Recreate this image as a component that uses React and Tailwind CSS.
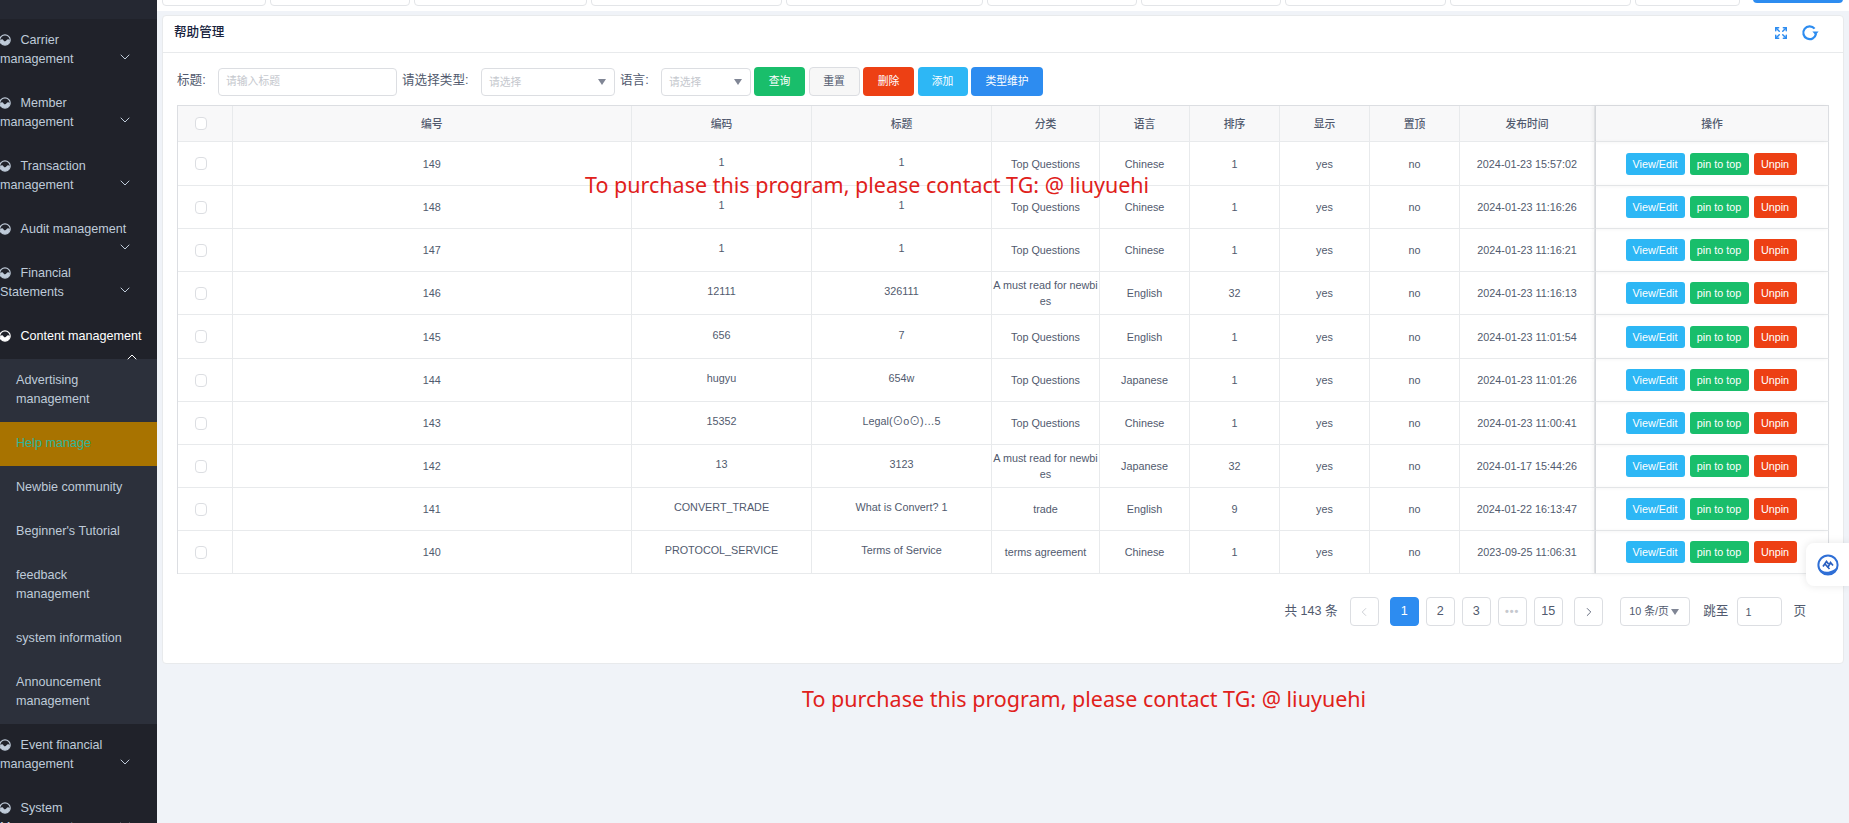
import React from 'react';
import { ChevronDown, ChevronUp, ChevronLeft, ChevronRight, Expand } from 'lucide-react';

const FONT = "font-['Liberation_Sans','Noto_Sans_CJK_SC',sans-serif]";

const rows = [
  { id: 149, code: '1', title: '1', cat: 'Top Questions', lang: 'Chinese', sort: 1, time: '2024-01-23 15:57:02' },
  { id: 148, code: '1', title: '1', cat: 'Top Questions', lang: 'Chinese', sort: 1, time: '2024-01-23 11:16:26' },
  { id: 147, code: '1', title: '1', cat: 'Top Questions', lang: 'Chinese', sort: 1, time: '2024-01-23 11:16:21' },
  { id: 146, code: '12111', title: '326111', cat: 'A must read for newbies', lang: 'English', sort: 32, time: '2024-01-23 11:16:13' },
  { id: 145, code: '656', title: '7', cat: 'Top Questions', lang: 'English', sort: 1, time: '2024-01-23 11:01:54' },
  { id: 144, code: 'hugyu', title: '654w', cat: 'Top Questions', lang: 'Japanese', sort: 1, time: '2024-01-23 11:01:26' },
  { id: 143, code: '15352', title: 'Legal(⊙o⊙)…5', cat: 'Top Questions', lang: 'Chinese', sort: 1, time: '2024-01-23 11:00:41' },
  { id: 142, code: '13', title: '3123', cat: 'A must read for newbies', lang: 'Japanese', sort: 32, time: '2024-01-17 15:44:26' },
  { id: 141, code: 'CONVERT_TRADE', title: 'What is Convert? 1', cat: 'trade', lang: 'English', sort: 9, time: '2024-01-22 16:13:47' },
  { id: 140, code: 'PROTOCOL_SERVICE', title: 'Terms of Service', cat: 'terms agreement', lang: 'Chinese', sort: 1, time: '2023-09-25 11:06:31' },
];

const heads = ['编号', '编码', '标题', '分类', '语言', '排序', '显示', '置顶', '发布时间'];
const colWidths = ['w-[54.5px]', 'w-[399.5px]', 'w-[180px]', 'w-[180px]', 'w-[108px]', 'w-[90px]', 'w-[90px]', 'w-[90px]', 'w-[90px]', 'w-[135px]', 'w-[234px]'];
const stripBoxes = ['w-[103.5px]', 'w-[140px]', 'w-[173.5px]', 'w-[190.5px]', 'w-[197px]', 'w-[150.5px]', 'w-[140px]', 'w-[160.5px]', 'w-[181.5px]', 'w-[105px]'];

const MenuIcon = ({ className = 'text-[#bfcbd9]' }) => (
  <svg viewBox="0 0 12 12" className={`-ml-[1.5px] mr-[10px] h-3 w-3 shrink-0 ${className}`}>
    <circle cx="6" cy="6" r="5.2" fill="none" stroke="currentColor" strokeWidth="1.2" />
    <path d="M1 6.5C2.5 5 3.7 5 4.6 6.4C5.3 7.6 6.8 7.6 7.5 6.3C8.4 4.8 9.8 5 11 6.3C10.7 9.3 8.5 11 6 11C3.5 11 1.4 9.3 1 6.5Z" fill="currentColor" />
  </svg>
);

const Parent = ({ first, second, chevronTop = 'top-[30px]', open }) => (
  <div className={`relative pt-[11.5px] pb-[13.5px] ${open ? 'font-medium text-white' : 'text-[#bfcbd9]'}`}>
    <div className="flex items-center">
      <MenuIcon className={open ? 'text-white' : 'text-[#bfcbd9]'} />
      <span className="whitespace-nowrap">{first}</span>
    </div>
    {second && <div className="whitespace-nowrap">{second}</div>}
    {open ? (
      <ChevronUp size={16} strokeWidth={1.5} className="absolute left-[124px] top-[34px] text-white" />
    ) : (
      <ChevronDown size={16} strokeWidth={1.5} className={`absolute left-[116.5px] ${chevronTop} text-[#bfcbd9]`} />
    )}
  </div>
);

const SubItem = ({ lines, active }) => (
  <div className={`px-4 pt-[11.5px] pb-[13.5px] ${active ? 'bg-[#a87300] text-[#2fb59a]' : 'text-[#bfcbd9]'}`}>
    {lines.map((l) => (
      <div key={l} className="whitespace-nowrap">{l}</div>
    ))}
  </div>
);

const Sidebar = () => (
  <aside className="h-full w-[157px] shrink-0 overflow-hidden bg-[#20222a] text-[12.6px] leading-[19px]">
    <div className="-mt-[16px] bg-[#252832] pb-[16px] pl-[25px] text-[#bfcbd9]">page</div>
    <Parent first="Carrier" second="management" />
    <Parent first="Member" second="management" />
    <Parent first="Transaction" second="management" />
    <Parent first="Audit management" chevronTop="top-[31px]" />
    <Parent first="Financial" second="Statements" />
    <Parent first="Content management" open />
    <div className="bg-[#2c303b]">
      <SubItem lines={['Advertising', 'management']} />
      <SubItem lines={['Help manage']} active />
      <SubItem lines={['Newbie community']} />
      <SubItem lines={["Beginner's Tutorial"]} />
      <SubItem lines={['feedback', 'management']} />
      <SubItem lines={['system information']} />
      <SubItem lines={['Announcement', 'management']} />
    </div>
    <Parent first="Event financial" second="management" />
    <Parent first="System" second="Management" />
  </aside>
);

const Caret = () => (
  <svg viewBox="0 0 8 6" className="h-[6px] w-2 shrink-0 text-[#808695]">
    <path d="M0 0H8L4 6Z" fill="currentColor" />
  </svg>
);

const Select = ({ width }) => (
  <div className={`flex h-7 items-center justify-between rounded border border-[#dcdee2] bg-white pl-[7px] pr-2 ${width}`}>
    <span className="pt-[2px] text-[10.8px] text-[#c5c8ce]">请选择</span>
    <Caret />
  </div>
);

const ToolBtn = ({ className, children }) => (
  <button className={`flex h-[29px] items-center justify-center rounded text-[10.8px] ${className}`}>{children}</button>
);

const Toolbar = () => (
  <div className="flex h-[29px] items-center pl-[14px] text-[12.6px] text-[#515a6e]">
    <span className="mr-[11px] -mt-[3px] w-[30px] whitespace-nowrap">标题:</span>
    <div className="flex h-7 w-[179px] items-center rounded border border-[#dcdee2] bg-white pl-[7px] text-[10.8px] text-[#c5c8ce]">请输入标题</div>
    <span className="ml-[5px] mr-[11px] -mt-[3px] w-[68px] whitespace-nowrap">请选择类型:</span>
    <Select width="w-[134px]" />
    <span className="ml-[5px] mr-[11px] -mt-[3px] w-[30px] whitespace-nowrap">语言:</span>
    <Select width="w-[90px]" />
    <div className="ml-[3px] flex gap-[3.5px]">
      <ToolBtn className="w-[51px] bg-[#19be6b] text-white">查询</ToolBtn>
      <ToolBtn className="w-[51px] border border-[#dcdee2] bg-[#f7f7f7] text-[#515a6e]">重置</ToolBtn>
      <ToolBtn className="w-[51px] bg-[#ed4014] text-white">删除</ToolBtn>
      <ToolBtn className="w-[50px] bg-[#2db7f5] text-white">添加</ToolBtn>
      <ToolBtn className="w-[72px] bg-[#2d8cf0] text-white">类型维护</ToolBtn>
    </div>
  </div>
);

const Check = () => <div className="ml-[17px] h-[13px] w-3 rounded-sm border border-[#dcdee2] bg-white" />;

const cell = 'border-b border-r border-[#e8eaec] p-0 text-center align-middle';
const lastCell = 'border-b border-l border-r border-b-[#e8eaec] border-l-[#d5d7db] border-r-[#dcdee2] p-0 text-center align-middle shadow-[-2px_0_4px_rgba(0,0,0,0.05)]';

const RowBtn = ({ className, children }) => (
  <button className={`flex h-[22px] items-center justify-center rounded-[3px] font-medium text-white ${className}`}>{children}</button>
);

const HelpTable = () => (
  <table className="mt-[9px] ml-[14px] w-[1652px] table-fixed border-separate border-spacing-0 border-l border-t border-[#dcdee2] text-[10.8px] leading-[16px] text-[#515a6e]">
    <colgroup>
      {colWidths.map((w, i) => (
        <col key={i} className={w} />
      ))}
    </colgroup>
    <thead>
      <tr className="h-9 bg-[#f8f8f9]">
        <th className={`${cell} font-normal`}>
          <Check />
        </th>
        {heads.map((h) => (
          <th key={h} className={`${cell} font-medium`}>{h}</th>
        ))}
        <th className={`${lastCell} font-medium`}>操作</th>
      </tr>
    </thead>
    <tbody>
      {rows.map((r, i) => (
        <tr key={r.id} className={i === 0 || i === 4 ? 'h-[44px]' : 'h-[43px]'}>
          <td className={cell}>
            <Check />
          </td>
          <td className={cell}>{r.id}</td>
          <td className={`${cell} pb-1`}>{r.code}</td>
          <td className={`${cell} pb-1`}>{r.title}</td>
          <td className={`${cell} break-all px-[1px]`}>{r.cat}</td>
          <td className={cell}>{r.lang}</td>
          <td className={cell}>{r.sort}</td>
          <td className={cell}>yes</td>
          <td className={cell}>no</td>
          <td className={cell}>{r.time}</td>
          <td className={lastCell}>
            <div className="flex justify-center gap-[5px] pr-[2px]">
              <RowBtn className="w-[59px] bg-[#2db7f5]">View/Edit</RowBtn>
              <RowBtn className="w-[59px] bg-[#19be6b]">pin to top</RowBtn>
              <RowBtn className="w-[43px] bg-[#ed4014]">Unpin</RowBtn>
            </div>
          </td>
        </tr>
      ))}
    </tbody>
  </table>
);

const PageBox = ({ active, muted, className = '', children }) => (
  <div className={`flex h-[29px] w-[29px] items-center justify-center rounded border ${active ? 'border-[#2d8cf0] bg-[#2d8cf0] text-white' : 'border-[#dcdee2] bg-white'} ${muted ? 'text-[#c5c8ce]' : ''} ${className}`}>
    {children}
  </div>
);

const Pagination = () => (
  <div className="mt-[23px] flex items-center justify-end pr-[37px] text-[12.6px] text-[#515a6e]">
    <span className="mr-[12px]">共 143 条</span>
    <div className="flex gap-[7px]">
      <PageBox muted><ChevronLeft size={14} strokeWidth={1.5} /></PageBox>
      <PageBox active className="ml-[4px]">1</PageBox>
      <PageBox>2</PageBox>
      <PageBox>3</PageBox>
      <PageBox muted><span className="text-[10.8px] font-bold tracking-[1px]">•••</span></PageBox>
      <PageBox>15</PageBox>
      <PageBox className="ml-[4.5px]"><ChevronRight size={14} strokeWidth={1.5} /></PageBox>
    </div>
    <div className="ml-[17px] flex h-[29px] w-[70px] items-center justify-between rounded border border-[#dcdee2] pl-2 pr-[10px] text-[10.8px]">
      <span>10 条/页</span>
      <Caret />
    </div>
    <span className="ml-[13px]">跳至</span>
    <div className="ml-[9px] flex h-[29px] w-[45px] items-center rounded border border-[#dcdee2] pl-[7px] pt-[2px] text-[10.8px]">1</div>
    <span className="ml-[11px]">页</span>
  </div>
);

const Notice = ({ className }) => (
  <p className={`whitespace-nowrap font-['Noto_Sans',sans-serif] text-[21.5px] leading-[30px] text-[#e0211b] ${className}`}>
    To purchase this program, please contact TG: @ liuyuehi
  </p>
);

export default function App() {
  return (
    <div className={`flex h-screen w-full overflow-hidden ${FONT}`}>
      <Sidebar />
      <main className="relative min-w-0 flex-1 overflow-hidden bg-[#f0f3f8]">
        <div className="flex h-[11px] items-start gap-[4px] overflow-hidden bg-white pl-[5px] pr-[6px]">
          {stripBoxes.map((w, i) => (
            <div key={i} className={`-mt-2 h-[14px] shrink-0 rounded border border-[#e3e5e8] bg-white ${w}`} />
          ))}
          <div className="-mt-2 ml-[9px] h-[11px] flex-1 rounded bg-[#2d8cf0]" />
        </div>
        <section className="relative mx-[5px] mt-[4px] h-[649px] rounded border border-[#e8eaec] bg-white">
          <header className="flex h-[37px] items-center justify-between border-b border-[#e8eaec] pb-[3px] pl-[11px] pr-[24px]">
            <h1 className="text-[12.6px] font-medium text-[#17233d]">帮助管理</h1>
            <div className="flex items-center gap-[13px] text-[#2d8cf0]">
              <Expand size={14} strokeWidth={2.5} />
              <svg viewBox="0 0 18 18" className="h-[18px] w-[18px]">
                <path d="M13.6 4.6A6.4 6.4 0 1 0 15 10" fill="none" stroke="currentColor" strokeWidth="2.2" />
                <path d="M11.4 7.6H17.6L14.6 11.2Z" fill="currentColor" />
              </svg>
            </div>
          </header>
          <div className="pt-[14px]">
            <Toolbar />
            <HelpTable />
            <Pagination />
          </div>
          <Notice className="absolute left-[422px] top-[154px]" />
        </section>
        <Notice className="ml-[645px] mt-[20px]" />
        <div className="absolute right-0 top-[543px] flex h-[43px] w-[43px] items-center justify-center rounded-l-lg bg-white shadow-[0_0_8px_rgba(0,0,0,0.1)]">
          <svg viewBox="0 0 22 22" className="h-[22px] w-[22px]">
            <circle cx="11" cy="11" r="9.6" fill="none" stroke="#2f6fd6" strokeWidth="2" />
            <path d="M1.5 13C4 17.5 9 18.5 13 17.2C16 16.2 18.5 15 20.5 12.5C20 18 15.5 21 11 21C6.5 21 2.5 18 1.5 13Z" fill="#2f6fd6" />
            <path d="M6 12.5L9.5 7.5L11.5 10M10.5 14L13.5 8.5L16 11.5M8 10L12.5 15" fill="none" stroke="#2a5fc0" strokeWidth="1.7" />
          </svg>
        </div>
      </main>
    </div>
  );
}
